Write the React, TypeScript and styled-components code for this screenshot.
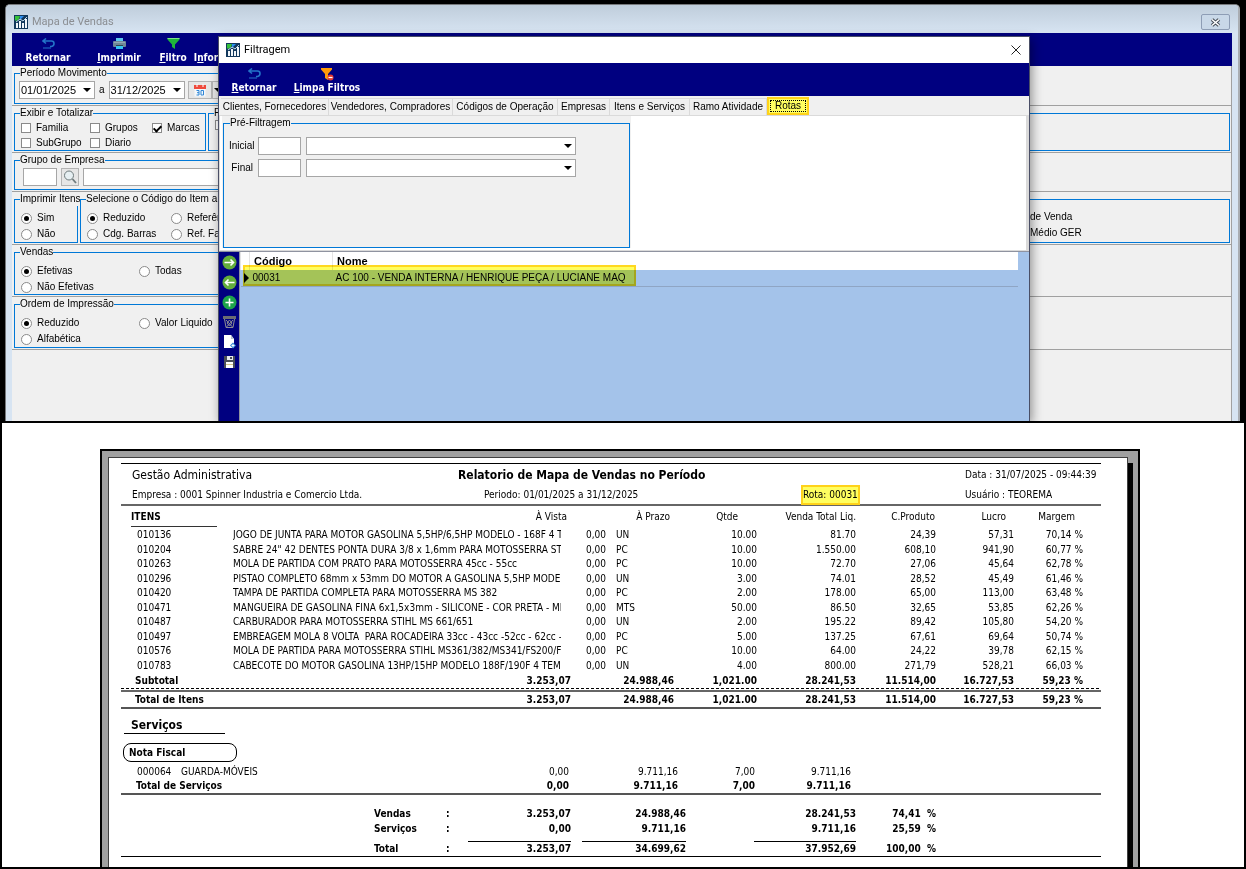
import React from "react";
import styled, { createGlobalStyle } from "styled-components";

const uiFont = '"Liberation Sans", Arial, sans-serif';
const boldFont = '"DejaVu Sans Condensed", "DejaVu Sans", Tahoma, sans-serif';
const titleFont = 'Roboto, "Segoe UI", sans-serif';

const GlobalStyle = createGlobalStyle`
  * { box-sizing: border-box; }
  body { margin: 0; background: #fff; color: #000; font: 10px/14px ${uiFont}; }
  button, input, select { font: inherit; color: inherit; margin: 0; padding: 0; border-radius: 0; }
  svg { display: block; flex: none; }
`;

const Page = styled.div`
  display: flex;
  flex-direction: column;
  height: 100vh;
  min-width: 1040px;
  border: 2px solid #000;
  border-top: 0;
`;

/* ---------- main window ---------- */

const Desktop = styled.section`
  position: relative;
  display: flex;
  flex: none;
  height: 423px;
  padding: 4px 4px 0 3px;
  background: #000;
  border-bottom: 2px solid #000;
  overflow: hidden;
`;

const Window = styled.div`
  display: flex;
  flex-direction: column;
  flex: 1;
  padding: 0 6px;
  background: #d7e4f2;
  border: 1px solid #77797c;
  border-bottom: 0;
  border-right: 2px solid #a9adb2;
  border-radius: 5px 5px 0 0;
`;

const TitleBar = styled.header`
  display: flex;
  align-items: center;
  height: 28px;
  margin: 0 -6px;
  padding: 6px 8px 0;
  gap: 4px;
  color: #8b8e92;
  font: 11px/16px ${titleFont};
  background: linear-gradient(#bfcddb, #d7e4f2);
  border-radius: 4px 4px 0 0;
`;

const Title = styled.h1`
  flex: 1;
  margin: 0;
  font: inherit;
`;

const CloseButton = styled.button`
  display: flex;
  align-items: center;
  justify-content: center;
  width: 29px;
  height: 16px;
  background: #c9d8e8;
  border: 1px solid #8e9db5;
  border-radius: 2px;
`;

const Toolbar = styled.nav`
  display: flex;
  flex: none;
  height: 33px;
  background: #000080;
`;

const ToolButton = styled.button<{ $width: number }>`
  display: flex;
  flex-direction: column;
  align-items: center;
  justify-content: space-between;
  width: ${(p) => p.$width}px;
  padding: 5px 0 2px;
  color: #fff;
  background: none;
  border: 0;
  font: bold 10px/13px ${boldFont};
  white-space: nowrap;
`;

const Form = styled.form`
  flex: 1;
  background: #f0f0f0;
  border-right: 1px solid #a0a0a0;
`;

const Panel = styled.div<{ $height: number }>`
  display: flex;
  gap: 2px;
  height: ${(p) => p.$height}px;
  padding: 0 1px 1px 2px;
  border-bottom: 1px solid #a0a0a0;
`;

const Group = styled.fieldset<{ $width?: number }>`
  flex: ${(p) => (p.$width ? `0 0 ${p.$width}px` : "1")};
  min-width: 0;
  margin: 0;
  padding: 0 4px;
  border: 1px solid #0078d7;
`;

const Legend = styled.legend`
  margin-left: 1px;
  padding: 0;
  white-space: nowrap;
  line-height: 14px;
`;

const Row = styled.div<{ $indent?: boolean }>`
  display: flex;
  align-items: center;
  gap: 4px;
  padding: 1px 0 0 ${(p) => (p.$indent ? 4 : 0)}px;
`;

const OptionGrid = styled.div<{ $columns: string; $row: number; $top?: number }>`
  display: grid;
  grid-template-columns: ${(p) => p.$columns};
  grid-auto-rows: ${(p) => p.$row}px;
  padding: ${(p) => p.$top ?? 0}px 0 0 2px;
`;

const Option = styled.label`
  display: flex;
  align-items: center;
  gap: 5px;
  white-space: nowrap;
`;

const Check = styled.input`
  appearance: none;
  display: grid;
  place-items: center;
  width: 10px;
  height: 10px;
  background: #fff;
  border: 1px solid #8a8a8a;
  &:checked::before {
    content: "";
    width: 3px;
    height: 6px;
    border: solid #000;
    border-width: 0 2px 2px 0;
    transform: rotate(45deg);
  }
`;

const Radio = styled.input`
  appearance: none;
  display: grid;
  place-items: center;
  width: 11px;
  height: 11px;
  background: #fff;
  border: 1px solid #8a8a8a;
  border-radius: 50%;
  &:checked::before {
    content: "";
    width: 5px;
    height: 5px;
    border-radius: 50%;
    background: #000;
  }
`;

const Field = styled.input<{ $width?: number }>`
  ${(p) => (p.$width ? `width: ${p.$width}px;` : "flex: 1;")}
  min-width: 0;
  height: 18px;
  background: #fff;
  border: 1px solid #a6a6a6;
`;

const SelectBox = styled.span<{ $width: number }>`
  position: relative;
  width: ${(p) => p.$width}px;
  height: 18px;
  font-size: 11px;
  &::after {
    content: "";
    position: absolute;
    top: 7px;
    right: 4px;
    border: solid transparent;
    border-width: 4px 4px 0;
    border-top-color: #000;
    pointer-events: none;
  }
`;

const Select = styled.select`
  appearance: none;
  display: block;
  width: 100%;
  height: 100%;
  padding-left: 1px;
  background: #fff;
  border: 1px solid #a6a6a6;
`;

const ButtonPair = styled.span`
  display: flex;
  margin-left: -1px;
`;

const SmallButton = styled.button<{ $width: number }>`
  display: flex;
  align-items: center;
  justify-content: center;
  width: ${(p) => p.$width}px;
  height: 18px;
  background: #e6e6e6;
  border: 1px solid #b4b4b4;
`;

/* ---------- filter dialog ---------- */

const Dialog = styled.section`
  position: absolute;
  top: 36px;
  bottom: 0;
  left: 216px;
  right: 214px;
  display: flex;
  flex-direction: column;
  background: #f0f0f0;
  border: 1px solid #4a4f66;
  border-bottom: 0;
  box-shadow: 2px 3px 10px rgba(0, 0, 0, 0.4);
`;

const DialogTitle = styled.header`
  display: flex;
  align-items: center;
  gap: 4px;
  height: 26px;
  flex: none;
  padding: 0 8px 0 7px;
  background: #fff;
  font: 11px/16px ${titleFont};
`;

const PlainButton = styled.button`
  display: flex;
  padding: 0;
  background: none;
  border: 0;
`;

const TabList = styled.div`
  display: flex;
  align-items: flex-end;
  flex: none;
  height: 19px;
  padding-left: 2px;
`;

const Tab = styled.button<{ $active?: boolean; $width: number }>`
  flex: none;
  width: ${(p) => p.$width}px;
  height: ${(p) => (p.$active ? 18 : 17)}px;
  background: ${(p) => (p.$active ? "#ffff60" : "#f0f0f0")};
  border: 1px solid #dadada;
  border-width: 1px 1px 0 0;
  white-space: nowrap;
  ${(p) =>
    p.$active &&
    `border: 2px solid #ffd21a; outline: 1px dotted #000; outline-offset: -4px; line-height: 12px;`}
`;

const TabPanel = styled.div`
  flex: none;
  height: 136px;
  padding: 0 0 0 2px;
  background: #fff;
  border: 1px solid #dadada;
  border-right-width: 3px;
`;

const PreFilterArea = styled.div`
  width: 409px;
  padding: 0 1px;
  background: #f0f0f0;
`;

const PreFilter = styled.fieldset`
  height: 132px;
  margin: 0;
  padding: 5px 0 0 5px;
  border: 1px solid #0078d7;
`;

const FilterLine = styled.div`
  display: grid;
  grid-template-columns: 24px 43px 270px;
  gap: 5px;
  align-items: center;
  height: 22px;
  > label { text-align: right; }
`;

const DialogBody = styled.div`
  display: flex;
  flex: 1;
  border-top: 1px solid #8f93a0;
`;

const SideBar = styled.nav`
  display: flex;
  flex-direction: column;
  width: 21px;
  background: #000080;
  border-right: 1px solid #8f93a0;
`;

const SideButton = styled.button`
  display: grid;
  place-items: center;
  height: 20px;
  padding: 0;
  background: none;
  border: 0;
`;

const GridArea = styled.div`
  position: relative;
  flex: 1;
  padding-right: 11px;
  background: #a4c3ea;
`;

const RouteTable = styled.table`
  width: 100%;
  border-collapse: collapse;
  table-layout: fixed;
  th { height: 18px; padding: 0 0 0 4px; text-align: left; font-size: 11px; background: #fff; border-left: 1px solid #e4e4e4; }
  td { height: 16px; padding: 0 0 0 3px; border-bottom: 1px solid #8fa5c4; white-space: nowrap; }
`;

const RowMarker = styled.span`
  display: block;
  width: 5px;
  border: solid transparent;
  border-width: 5px 0 5px 5px;
  border-left-color: #000;
`;

const RowHighlight = styled.div`
  position: absolute;
  top: 13px;
  left: 3px;
  width: 393px;
  height: 21px;
  background: #ffff60;
  border: 2px solid #ffd820;
  mix-blend-mode: multiply;
  pointer-events: none;
`;

/* ---------- report ---------- */

const ReportArea = styled.section`
  display: flex;
  flex: 1;
  min-height: 0;
  padding: 26px 104px 0 98px;
  background: #fff;
  overflow: hidden;
`;

const ReportFrame = styled.div`
  display: flex;
  flex: 1;
  padding: 6px 5px 0 6px;
  background: #a0a0a0;
  border: 2px solid #000;
  border-bottom: 0;
`;

const Sheet = styled.article`
  flex: 1;
  min-width: 0;
  padding: 5px 26px 0 12px;
  background: #fff;
  border: 1px solid #404040;
  border-width: 1px 1px 0;
  font: 10px/14px ${boldFont};
`;

const SheetShadow = styled.div`
  width: 5px;
  margin-top: 6px;
  background: #000;
`;

const ReportHead = styled.header`
  display: grid;
  grid-template-columns: 1fr 343px 164px 136px;
  grid-template-rows: 22px 18px;
  align-items: center;
  height: 43px;
  padding-left: 11px;
  border-top: 1px solid #000;
  border-bottom: 2px solid #666;
  white-space: nowrap;
`;

const SystemName = styled.span`
  font-size: 12px;
`;

const ReportTitle = styled.h2`
  grid-column: span 2;
  margin: 0;
  font-size: 12px;
`;

const Period = styled.span`
  padding-left: 26px;
`;

const Route = styled.mark`
  justify-self: start;
  padding: 1px 0;
  color: inherit;
  background: #ffff60;
  border: 2px solid #ffd21a;
  line-height: 14px;
`;

const Table = styled.table`
  width: 100%;
  border-collapse: collapse;
  table-layout: fixed;
  td, th { padding: 0; font-weight: inherit; text-align: right; white-space: nowrap; }
`;

const ItemTable = styled(Table)`
  tbody tr { height: 14px; }
  tbody tr:nth-child(even) { height: 15px; }
`;

const HeadRow = styled.tr`
  height: 22px;
`;

const TotalRow = styled.tr<{ $height: number; $top?: boolean }>`
  height: ${(p) => p.$height}px;
  font-weight: bold;
  vertical-align: ${(p) => (p.$top ? "top" : "middle")};
`;

const Cell = styled.td<{ $left?: number; $right?: number }>`
  && {
    ${(p) => (p.$left !== undefined ? `padding-left: ${p.$left}px; text-align: left;` : "")}
    ${(p) => (p.$right !== undefined ? `padding-right: ${p.$right}px;` : "")}
  }
`;

const HeadCell = styled.th<{ $right: number }>`
  && { padding-right: ${(p) => p.$right}px; }
`;

const NameCell = styled.td`
  && { text-align: left; overflow: hidden; white-space: pre; }
`;

const ItemsTitle = styled.span`
  display: block;
  width: 86px;
  margin-left: 10px;
  border-bottom: 1px solid #333;
  font-weight: bold;
  line-height: 18px;
  text-align: left;
`;

const DashedLine = styled.div`
  height: 4px;
  border-bottom: 2px solid #666;
  background: repeating-linear-gradient(90deg, #000 0 3px, transparent 3px 5px) top / 100% 1px no-repeat;
`;

const Ruled = styled.div`
  border-bottom: 2px solid #555;
`;

const ServicesTitle = styled.h3`
  width: 101px;
  margin: 8px 0 9px 3px;
  padding-left: 7px;
  border-bottom: 1px solid #000;
  font-size: 12px;
  line-height: 16px;
`;

const Pill = styled.h4`
  width: 114px;
  height: 19px;
  margin: 0 0 3px 2px;
  padding-left: 5px;
  border: 1px solid #000;
  border-radius: 8px;
  font-size: 10px;
  line-height: 17px;
`;

const ServiceLine = styled.div`
  display: flex;
  justify-content: space-between;
`;

const TotalLine = styled(ServiceLine)`
  padding-left: 15px;
`;

const SummaryWrap = styled.div`
  padding-top: 11px;
  border-bottom: 1px solid #000;
  font-weight: bold;
`;

const SumCell = styled.td`
  && { border-top: 1px solid #000; }
`;

/* ---------- icons ---------- */

const AppIcon = () => (
  <svg width="14" height="14" viewBox="0 0 14 14">
    <rect width="14" height="14" fill="#12385c" />
    <path d="M1 1h5l-1 3-3 2-1-1z" fill="#35c13a" />
    <path d="M6 1h4l-4 4z" fill="#2b8df0" />
    <path d="M2 8h2v5H2zM5 6h2v7H5zM8 8h2v5H8zM11 4h2v9h-2z" fill="#f2f7fb" />
    <path d="M2 7l4-3 3 2 4-4" stroke="#bcd8ea" fill="none" />
  </svg>
);

const ReturnIcon = () => (
  <svg width="13" height="12" viewBox="0 0 13 12" fill="none" stroke="#2374c8">
    <path d="M4 .5L1 3l3 2.500M1.500 3H9.500Q12 3 12 5.500T9.500 8.500H8" strokeWidth="1.600" />
    <path d="M2 9v2M4 9v2M6 9v2M8 9v2" strokeWidth="1" />
  </svg>
);

const PrinterIcon = () => (
  <svg width="13" height="12" viewBox="0 0 13 12">
    <path d="M3 0h7v4H3z" fill="#5cc6ee" />
    <rect y="3" width="13" height="6" rx="1" fill="#6f8796" />
    <path d="M1 4h11v1H1z" fill="#94a7b3" />
    <path d="M3 7h7v4H3z" fill="#35c4f2" />
    <path d="M3 7h7v1H3z" fill="#33434e" />
  </svg>
);

const FunnelIcon = () => (
  <svg width="13" height="12" viewBox="0 0 13 12">
    <path d="M.5 0h12v1.500L8 6.500V11L5 9V6.500L.5 1.500z" fill="#1fb53a" />
    <path d="M.5 0h12v1H.5z" fill="#7ce08a" />
  </svg>
);

const ClearFunnelIcon = () => (
  <svg width="13" height="13" viewBox="0 0 13 13">
    <path d="M0 0h11v1.500L7 6v6L4 10V6L0 1.500z" fill="#ff9a0a" />
    <circle cx="9.500" cy="9.500" r="3" fill="#e53935" />
    <path d="M7.500 9.500h4" stroke="#fff" strokeWidth="1.200" />
  </svg>
);

const CalendarIcon = () => (
  <svg width="12" height="13" viewBox="0 0 12 13">
    <rect x=".5" y="1.500" width="11" height="11" fill="#f4f8fb" />
    <path d="M0 1h12v4H0z" fill="#ef4a3c" />
    <path d="M3 0v3M9 0v3" stroke="#fff" />
    <path d="M2.500 6.500h2.500v4.500H2.500M3 8.700h2M7 6.500h2.500v4.500H7z" fill="none" stroke="#2f86d6" />
  </svg>
);

const CaretIcon = () => (
  <svg width="8" height="4" viewBox="0 0 8 4">
    <path d="M0 0h8L4 4z" />
  </svg>
);

const SearchIcon = () => (
  <svg width="14" height="14" viewBox="0 0 14 14" fill="none">
    <circle cx="6" cy="5.500" r="4.500" fill="#e6eff2" stroke="#6f7b7d" />
    <path d="M9.500 9l3.500 4" stroke="#6f7b7d" strokeWidth="1.800" />
  </svg>
);

const CrossIcon = () => (
  <svg width="10" height="10" viewBox="0 0 10 10">
    <path d="M.5.5l9 9M9.500.5l-9 9" stroke="#222" />
  </svg>
);

const AeroCross = () => (
  <svg width="11" height="9" viewBox="0 0 11 9">
    <path d="M2 1.500l7 6M9 1.500l-7 6" stroke="#444b55" strokeWidth="3.600" />
    <path d="M2 1.500l7 6M9 1.500l-7 6" stroke="#fff" strokeWidth="1.600" />
  </svg>
);

const CircleIcon = ({ d, fill }: { d: string; fill: string }) => (
  <svg width="15" height="15" viewBox="0 0 15 15">
    <circle cx="7.500" cy="7.500" r="7" fill={fill} />
    <path d={d} stroke="#fff" strokeWidth="1.600" fill="none" />
  </svg>
);

const TrashIcon = () => (
  <svg width="13" height="12" viewBox="0 0 13 12" fill="none" stroke="#8d8d94">
    <path d="M0 1.500h13" stroke="#6c6c72" strokeWidth="3" />
    <path d="M1.500 3l1.500 8.500h7L11.500 3M3 4l6.500 7M10 4l-6.500 7M6.500 4l2.500 3-2.500 3L4 7z" />
  </svg>
);

const NewPageIcon = () => (
  <svg width="13" height="14" viewBox="0 0 13 14">
    <path d="M1 0h7l3 4v9H1z" fill="#fff" />
    <path d="M8 0v4h3z" fill="#b9c4d0" />
    <path d="M10 7.500l3 3-3 3-3-3z" fill="#2f86d6" />
    <path d="M10 9v3M8.500 10.500h3" stroke="#fff" />
  </svg>
);

const SaveIcon = () => (
  <svg width="11" height="12" viewBox="0 0 11 12">
    <path d="M0 0h11v12H0z" fill="#4b4f57" />
    <path d="M3 0h6v4H3z" fill="#e8eaee" />
    <path d="M6 1h2v2H6z" fill="#4b4f57" />
    <path d="M2 6h7v6H2z" fill="#fff" />
    <path d="M2 8.500h7" stroke="#d8c98a" />
  </svg>
);

/* ---------- data ---------- */

const tabs: [string, number][] = [
  ["Clientes, Fornecedores", 108],
  ["Vendedores, Compradores", 124],
  ["Códigos de Operação", 105],
  ["Empresas", 52],
  ["Itens e Serviços", 80],
  ["Ramo Atividade", 77],
  ["Rotas", 42],
];

const items = [
  ["010136", "JOGO DE JUNTA PARA MOTOR GASOLINA 5,5HP/6,5HP MODELO - 168F 4 T", "UN", "10.00", "81.70", "24,39", "57,31", "70,14 %"],
  ["010204", 'SABRE 24" 42 DENTES PONTA DURA 3/8 x 1,6mm PARA MOTOSSERRA STI', "PC", "10.00", "1.550.00", "608,10", "941,90", "60,77 %"],
  ["010263", "MOLA DE PARTIDA COM PRATO PARA MOTOSSERRA 45cc - 55cc", "PC", "10.00", "72.70", "27,06", "45,64", "62,78 %"],
  ["010296", "PISTAO COMPLETO 68mm x 53mm DO MOTOR A GASOLINA 5,5HP MODELO", "UN", "3.00", "74.01", "28,52", "45,49", "61,46 %"],
  ["010420", "TAMPA DE PARTIDA COMPLETA PARA MOTOSSERRA MS 382", "PC", "2.00", "178.00", "65,00", "113,00", "63,48 %"],
  ["010471", "MANGUEIRA DE GASOLINA FINA 6x1,5x3mm - SILICONE - COR PRETA - ME", "MTS", "50.00", "86.50", "32,65", "53,85", "62,26 %"],
  ["010487", "CARBURADOR PARA MOTOSSERRA STIHL MS 661/651", "UN", "2.00", "195.22", "89,42", "105,80", "54,20 %"],
  ["010497", "EMBREAGEM MOLA 8 VOLTA  PARA ROCADEIRA 33cc - 43cc -52cc - 62cc - 6", "PC", "5.00", "137.25", "67,61", "69,64", "50,74 %"],
  ["010576", "MOLA DE PARTIDA PARA MOTOSSERRA STIHL MS361/382/MS341/FS200/FS", "PC", "10.00", "64.00", "24,22", "39,78", "62,15 %"],
  ["010783", "CABECOTE DO MOTOR GASOLINA 13HP/15HP MODELO 188F/190F 4 TEMPO", "UN", "4.00", "800.00", "271,79", "528,21", "66,03 %"],
];

const itemTotals = ["24.988,46", "1,021.00", "28.241,53", "11.514,00", "16.727,53", "59,23 %"];

const Choice = ({ name, label, checked }: { name: string; label: string; checked?: boolean }) => (
  <Option>
    <Radio type="radio" name={name} defaultChecked={checked} />
    {label}
  </Option>
);

const Tick = ({ label, checked }: { label: string; checked?: boolean }) => (
  <Option>
    <Check type="checkbox" defaultChecked={checked} />
    {label}
  </Option>
);

const Columns = ({ widths }: { widths: (number | "auto")[] }) => (
  <colgroup>
    {widths.map((w, i) => (
      <col key={i} style={{ width: w }} />
    ))}
  </colgroup>
);

const itemColumns: (number | "auto")[] = [112, "auto", 45, 68, 83, 99, 80, 78, 69, 18];
const serviceColumns: (number | "auto")[] = [60, "auto", 109, 77, 96, 250];
const summaryColumns: (number | "auto")[] = ["auto", 72, 22, 103, 11, 104, 68, 102, 80, 165];

const ItemTotalRow = ({ label, height }: { label: string; height: number }) => (
  <TotalRow $height={height}>
    <Cell $left={14}>{label}</Cell>
    <Cell colSpan={2} $right={35}>3.253,07</Cell>
    {itemTotals.map((v, i) => (
      <Cell key={i}>{v}</Cell>
    ))}
    <td />
  </TotalRow>
);

const MainWindow = () => (
  <Window>
    <TitleBar>
      <AppIcon />
      <Title>Mapa de Vendas</Title>
      <CloseButton type="button" aria-label="Fechar"><AeroCross /></CloseButton>
    </TitleBar>
    <Toolbar>
      <ToolButton $width={72}><ReturnIcon /><span>Retornar</span></ToolButton>
      <ToolButton $width={70}><PrinterIcon /><span><u>I</u>mprimir</span></ToolButton>
      <ToolButton $width={38}><FunnelIcon /><span><u>F</u>iltro</span></ToolButton>
      <ToolButton $width={28}><i /><span>I<u>n</u>for</span></ToolButton>
    </Toolbar>
    <Form>
      <Panel $height={40}>
        <Group $width={700}>
          <Legend>Período Movimento</Legend>
          <Row>
            <SelectBox $width={76}><Select aria-label="Data inicial"><option>01/01/2025</option></Select></SelectBox>
            <span>a</span>
            <SelectBox $width={76}><Select aria-label="Data final"><option>31/12/2025</option></Select></SelectBox>
            <ButtonPair>
              <SmallButton type="button" $width={24} aria-label="Calendário"><CalendarIcon /></SmallButton>
              <SmallButton type="button" $width={12} aria-label="Mais datas"><CaretIcon /></SmallButton>
            </ButtonPair>
          </Row>
        </Group>
      </Panel>
      <Panel $height={47}>
        <Group $width={192}>
          <Legend>Exibir e Totalizar</Legend>
          <OptionGrid $columns="69px 62px 1fr" $row={15}>
            <Tick label="Familia" />
            <Tick label="Grupos" />
            <Tick label="Marcas" checked />
            <Tick label="SubGrupo" />
            <Tick label="Diario" />
          </OptionGrid>
        </Group>
        <Group>
          <Legend>F</Legend>
          <OptionGrid $columns="1fr" $row={15}>
            <Check type="checkbox" aria-label="F" />
          </OptionGrid>
        </Group>
      </Panel>
      <Panel $height={39}>
        <Group $width={700}>
          <Legend>Grupo de Empresa</Legend>
          <Row $indent>
            <Field $width={34} aria-label="Código do grupo" />
            <SmallButton type="button" $width={18} aria-label="Pesquisar"><SearchIcon /></SmallButton>
            <Field aria-label="Nome do grupo" />
          </Row>
        </Group>
      </Panel>
      <Panel $height={53}>
        <Group $width={64}>
          <Legend>Imprimir Itens</Legend>
          <OptionGrid $columns="1fr" $row={16} $top={4}>
            <Choice name="imprimir" label="Sim" checked />
            <Choice name="imprimir" label="Não" />
          </OptionGrid>
        </Group>
        <Group>
          <Legend>Selecione o Código do Item a I</Legend>
          <OptionGrid $columns="84px 1fr 195px" $row={16} $top={4}>
            <Choice name="codigo" label="Reduzido" checked />
            <Choice name="codigo" label="Referên" />
            <span>de Venda</span>
            <Choice name="codigo" label="Cdg. Barras" />
            <Choice name="codigo" label="Ref. Fa" />
            <span>Médio GER</span>
          </OptionGrid>
        </Group>
      </Panel>
      <Panel $height={52}>
        <Group $width={700}>
          <Legend>Vendas</Legend>
          <OptionGrid $columns="118px 1fr" $row={16} $top={4}>
            <Choice name="vendas" label="Efetivas" checked />
            <Choice name="vendas" label="Todas" />
            <Choice name="vendas" label="Não Efetivas" />
          </OptionGrid>
        </Group>
      </Panel>
      <Panel $height={53}>
        <Group $width={700}>
          <Legend>Ordem de Impressão</Legend>
          <OptionGrid $columns="118px 1fr" $row={16} $top={4}>
            <Choice name="ordem" label="Reduzido" checked />
            <Choice name="ordem" label="Valor Liquido" />
            <Choice name="ordem" label="Alfabética" />
          </OptionGrid>
        </Group>
      </Panel>
    </Form>
  </Window>
);

const FilterDialog = () => (
  <Dialog role="dialog" aria-label="Filtragem">
    <DialogTitle>
      <AppIcon />
      <Title as="h2">Filtragem</Title>
      <PlainButton type="button" aria-label="Fechar"><CrossIcon /></PlainButton>
    </DialogTitle>
    <Toolbar>
      <ToolButton $width={70}><ReturnIcon /><span><u>R</u>etornar</span></ToolButton>
      <ToolButton $width={76}><ClearFunnelIcon /><span><u>L</u>impa Filtros</span></ToolButton>
    </Toolbar>
    <TabList role="tablist">
      {tabs.map(([label, width]) => (
        <Tab key={label} type="button" role="tab" $width={width} $active={label === "Rotas"}>{label}</Tab>
      ))}
    </TabList>
    <TabPanel>
      <PreFilterArea>
        <PreFilter>
          <Legend>Pré-Filtragem</Legend>
          <FilterLine>
            <label htmlFor="inicial">Inicial</label>
            <Field id="inicial" />
            <SelectBox $width={270}><Select aria-label="Nome inicial" /></SelectBox>
          </FilterLine>
          <FilterLine>
            <label htmlFor="final">Final</label>
            <Field id="final" />
            <SelectBox $width={270}><Select aria-label="Nome final" /></SelectBox>
          </FilterLine>
        </PreFilter>
      </PreFilterArea>
    </TabPanel>
    <DialogBody>
      <SideBar>
        <SideButton aria-label="Próximo"><CircleIcon fill="#63ad3c" d="M2.500 7.500h9M8.500 4.500l3 3-3 3" /></SideButton>
        <SideButton aria-label="Anterior"><CircleIcon fill="#63ad3c" d="M12.500 7.500h-9M6.500 4.500l-3 3 3 3" /></SideButton>
        <SideButton aria-label="Adicionar"><CircleIcon fill="#1ea44a" d="M7.500 3.500v8M3.500 7.500h8" /></SideButton>
        <SideButton aria-label="Excluir"><TrashIcon /></SideButton>
        <SideButton aria-label="Novo"><NewPageIcon /></SideButton>
        <SideButton aria-label="Salvar"><SaveIcon /></SideButton>
      </SideBar>
      <GridArea>
        <RouteTable>
          <Columns widths={[9, 83, "auto"]} />
          <thead>
            <tr><th aria-label="Seleção" /><th>Código</th><th>Nome</th></tr>
          </thead>
          <tbody>
            <tr>
              <td><RowMarker /></td>
              <td>00031</td>
              <td>AC 100 - VENDA INTERNA / HENRIQUE PEÇA / LUCIANE MAQ</td>
            </tr>
          </tbody>
        </RouteTable>
        <RowHighlight />
      </GridArea>
    </DialogBody>
  </Dialog>
);

const Report = () => (
  <ReportFrame>
    <Sheet>
      <ReportHead>
        <SystemName>Gestão Administrativa</SystemName>
        <ReportTitle>Relatorio de Mapa de Vendas no Período</ReportTitle>
        <span>Data : 31/07/2025 - 09:44:39</span>
        <span>Empresa : 0001 Spinner Industria e Comercio Ltda.</span>
        <Period>Periodo: 01/01/2025 a 31/12/2025</Period>
        <Route>Rota: 00031</Route>
        <span>Usuário : TEOREMA</span>
      </ReportHead>
      <ItemTable>
        <Columns widths={itemColumns} />
        <thead>
          <HeadRow>
            <th><ItemsTitle>ITENS</ItemsTitle></th>
            <HeadCell colSpan={2} $right={39}>À Vista</HeadCell>
            <HeadCell $right={4}>À Prazo</HeadCell>
            <HeadCell $right={19}>Qtde</HeadCell>
            <HeadCell $right={0}>Venda Total Liq.</HeadCell>
            <HeadCell $right={1}>C.Produto</HeadCell>
            <HeadCell $right={8}>Lucro</HeadCell>
            <HeadCell $right={8}>Margem</HeadCell>
            <td />
          </HeadRow>
        </thead>
        <tbody>
          {items.map(([code, name, unit, ...values]) => (
            <tr key={code}>
              <Cell $left={16}>{code}</Cell>
              <NameCell>{name}</NameCell>
              <td>0,00</td>
              <Cell $left={10}>{unit}</Cell>
              {values.map((v, i) => (
                <td key={i}>{v}</td>
              ))}
              <td />
            </tr>
          ))}
        </tbody>
        <tfoot>
          <ItemTotalRow label="Subtotal" height={15} />
        </tfoot>
      </ItemTable>
      <DashedLine />
      <Ruled>
        <ItemTable>
          <Columns widths={itemColumns} />
          <tfoot><ItemTotalRow label="Total de Itens" height={15} /></tfoot>
        </ItemTable>
      </Ruled>
      <ServicesTitle>Serviços</ServicesTitle>
      <Pill>Nota Fiscal</Pill>
      <Ruled>
        <Table>
          <Columns widths={serviceColumns} />
          <tbody>
            <tr>
              <Cell $left={16}>000064</Cell>
              <td><ServiceLine><span>GUARDA-MÓVEIS</span><span>0,00</span></ServiceLine></td>
              <td>9.711,16</td>
              <td>7,00</td>
              <td>9.711,16</td>
              <td />
            </tr>
            <TotalRow $height={14}>
              <td colSpan={2}><TotalLine><span>Total de Serviços</span><span>0,00</span></TotalLine></td>
              <td>9.711,16</td>
              <td>7,00</td>
              <td>9.711,16</td>
              <td />
            </TotalRow>
          </tbody>
        </Table>
      </Ruled>
      <SummaryWrap>
        <Table>
          <Columns widths={summaryColumns} />
          <tbody>
            <TotalRow $height={16}>
              <td /><Cell $left={0}>Vendas</Cell><Cell $left={0}>:</Cell>
              <td>3.253,07</td><td /><td>24.988,46</td><td /><td>28.241,53</td><td>74,41&nbsp; %</td><td />
            </TotalRow>
            <TotalRow $height={19} $top>
              <td /><Cell $left={0}>Serviços</Cell><Cell $left={0}>:</Cell>
              <td>0,00</td><td /><td>9.711,16</td><td /><td>9.711,16</td><td>25,59&nbsp; %</td><td />
            </TotalRow>
            <TotalRow $height={15}>
              <td /><Cell $left={0}>Total</Cell><Cell $left={0}>:</Cell>
              <SumCell>3.253,07</SumCell><td /><SumCell>34.699,62</SumCell><td /><SumCell>37.952,69</SumCell>
              <td>100,00&nbsp; %</td><td />
            </TotalRow>
          </tbody>
        </Table>
      </SummaryWrap>
    </Sheet>
    <SheetShadow />
  </ReportFrame>
);

export default function App() {
  return (
    <>
      <GlobalStyle />
      <Page>
        <Desktop>
          <MainWindow />
          <FilterDialog />
        </Desktop>
        <ReportArea>
          <Report />
        </ReportArea>
      </Page>
    </>
  );
}
